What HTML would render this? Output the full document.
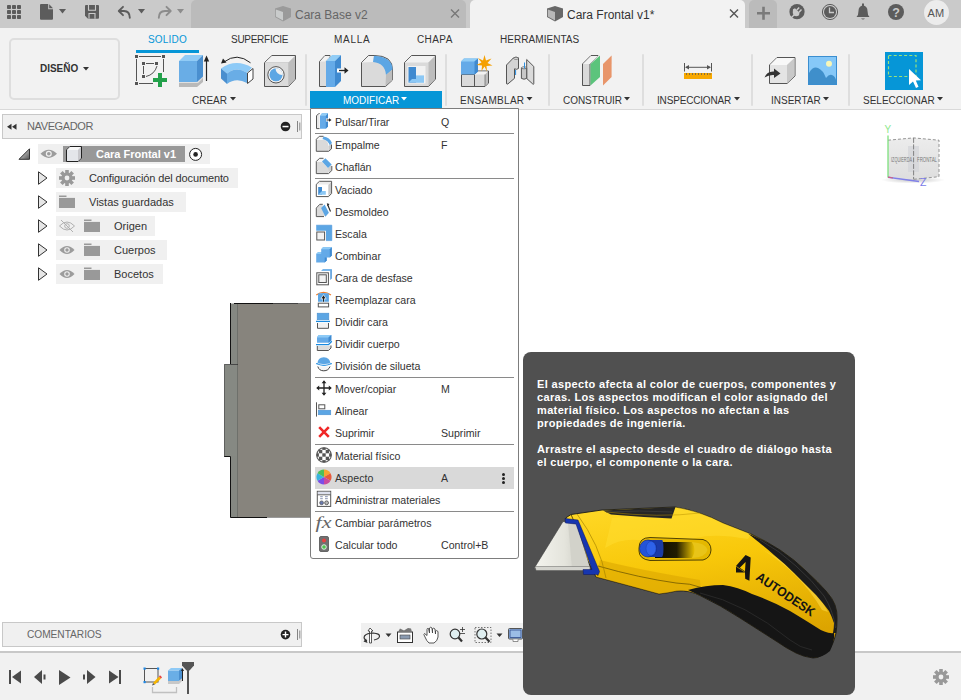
<!DOCTYPE html>
<html><head><meta charset="utf-8">
<style>
*{box-sizing:border-box}
html,body{margin:0;padding:0}
body{width:961px;height:700px;position:relative;overflow:hidden;background:#fff;font-family:"Liberation Sans",sans-serif;color:#333}
.a{position:absolute}
.t{position:absolute;white-space:pre;line-height:1}
.mi{position:absolute;white-space:pre;height:22px;line-height:22px;font-size:10.6px;color:#333}
svg{position:absolute;overflow:visible}
</style></head><body>

<!-- TOP BAR -->
<div class="a" style="left:0;top:0;width:961px;height:28px;background:#cacaca"></div>
<div class="a" style="left:191px;top:0;width:275px;height:28px;background:#bbbbbb;border-radius:5px 5px 0 0"></div>
<div class="a" style="left:470px;top:0;width:275px;height:28px;background:#f2f2f2;border-radius:5px 5px 0 0"></div>
<div class="a" style="left:749px;top:0;width:28px;height:28px;background:#bbbbbb;border-radius:5px 5px 0 0"></div>
<div class="t" style="left:295px;top:8.6px;font-size:12px;color:#666">Cara Base v2</div>
<div class="t" style="left:567px;top:8.6px;font-size:12px;color:#333">Cara Frontal v1*</div>
<div class="a" style="left:924px;top:0;width:25px;height:25px;border-radius:50%;background:#ececec"></div>
<div class="t" style="left:927.6px;top:7.6px;font-size:11px;color:#555">AM</div>

<!-- TOOLBAR -->
<div class="a" style="left:0;top:28px;width:961px;height:82px;background:#f2f2f2;border-bottom:1px solid #d9d9d9"></div>
<div class="a" style="left:9px;top:38px;width:111px;height:62px;border:2px solid #dedede;border-radius:5px"></div>
<div class="t" style="left:40px;top:62.6px;font-size:11px;font-weight:bold;color:#333;transform:scaleX(0.905);transform-origin:0 0">DISEÑO</div>

<div class="t" style="left:148px;top:34.8px;font-size:10px;letter-spacing:0.2px;color:#0696d7">SOLIDO</div>
<div class="a" style="left:136px;top:50px;width:63px;height:3px;background:#0696d7"></div>
<div class="t" style="left:231px;top:34.8px;font-size:10px;letter-spacing:-0.28px;color:#333">SUPERFICIE</div>
<div class="t" style="left:334px;top:34.8px;font-size:10px;letter-spacing:0.7px;color:#333">MALLA</div>
<div class="t" style="left:417px;top:34.8px;font-size:10px;letter-spacing:0.4px;color:#333">CHAPA</div>
<div class="t" style="left:500px;top:34.8px;font-size:10px;letter-spacing:0.05px;color:#333">HERRAMIENTAS</div>

<div class="a" style="left:310px;top:91px;width:132px;height:17px;background:#0696d7"></div>
<div class="t" style="left:192px;top:96.3px;font-size:10px;color:#333">CREAR</div>
<div class="t" style="left:343px;top:96.3px;font-size:10px;color:#fff">MODIFICAR</div>
<div class="t" style="left:460px;top:96.3px;font-size:10px;letter-spacing:0.3px;color:#333">ENSAMBLAR</div>
<div class="t" style="left:563px;top:96.3px;font-size:10px;letter-spacing:-0.05px;color:#333">CONSTRUIR</div>
<div class="t" style="left:657px;top:96.3px;font-size:10px;letter-spacing:-0.17px;color:#333">INSPECCIONAR</div>
<div class="t" style="left:771px;top:96.3px;font-size:10px;color:#333">INSERTAR</div>
<div class="t" style="left:863px;top:96.3px;font-size:10px;color:#333">SELECCIONAR</div>

<div class="a" style="left:305px;top:54px;width:2px;height:52px;background:#dedede;border-radius:1px"></div>
<div class="a" style="left:445px;top:54px;width:2px;height:52px;background:#dedede;border-radius:1px"></div>
<div class="a" style="left:548px;top:54px;width:2px;height:52px;background:#dedede;border-radius:1px"></div>
<div class="a" style="left:642px;top:54px;width:2px;height:52px;background:#dedede;border-radius:1px"></div>
<div class="a" style="left:751px;top:54px;width:2px;height:52px;background:#dedede;border-radius:1px"></div>
<div class="a" style="left:848px;top:54px;width:2px;height:52px;background:#dedede;border-radius:1px"></div>
<div class="a" style="left:885px;top:52px;width:38px;height:38px;background:#0696d7"></div>

<svg style="left:0;top:0" width="961" height="110" viewBox="0 0 961 110">
<!-- grid icon -->
<g fill="#5c5c5c">
<rect x="7" y="5" width="4" height="4" rx="0.8"/><rect x="12" y="5" width="4" height="4" rx="0.8"/><rect x="17" y="5" width="4" height="4" rx="0.8"/>
<rect x="7" y="10" width="4" height="4" rx="0.8"/><rect x="12" y="10" width="4" height="4" rx="0.8"/><rect x="17" y="10" width="4" height="4" rx="0.8"/>
<rect x="7" y="15" width="4" height="4" rx="0.8"/><rect x="12" y="15" width="4" height="4" rx="0.8"/><rect x="17" y="15" width="4" height="4" rx="0.8"/>
</g>
<!-- file -->
<path d="M41 4H48.2V9.3H53V18.8Q53 19.8 52 19.8H41Q40 19.8 40 18.8V5Q40 4 41 4Z" fill="#5c5c5c"/><path d="M49.2 4.2V8.3H53Z" fill="#5c5c5c"/>
<path d="M59 9H66L62.5 13.5Z" fill="#5c5c5c"/>
<!-- save -->
<path d="M86 5H98Q99 5 99 6V17.8Q99 18.8 98 18.8H88L85 15.8V6Q85 5 86 5Z" fill="#5c5c5c"/><path d="M88.5 5V10.3H95.5V5" fill="none" stroke="#cacaca" stroke-width="1.1"/><path d="M89 18.8V13.5H95V18.8" fill="none" stroke="#cacaca" stroke-width="1.1"/>
<!-- undo -->
<path d="M123 6.8L118.8 11L123 15.2M119.5 11H124Q129.8 11.3 129.8 17.8" fill="none" stroke="#5c5c5c" stroke-width="1.9" stroke-linecap="round" stroke-linejoin="round"/>
<path d="M138 9H145L141.5 13.5Z" fill="#5c5c5c"/>
<!-- redo -->
<path d="M166.5 6.8L170.7 11L166.5 15.2M170 11H165Q158.8 11.3 158.8 17.8" fill="none" stroke="#8c8c8c" stroke-width="1.9" stroke-linecap="round" stroke-linejoin="round"/>
<path d="M177 9H184L180.5 13.5Z" fill="#8c8c8c"/>
<!-- tab cube icons -->
<g><path d="M275 8.5L283 6L291 8.5V17L283 21.5L275 17Z" fill="#9a9a9a"/><path d="M275.8 9.5L283 12V20.5L275.8 16.6Z" fill="#c9cbcb"/></g>
<g><path d="M547 8.5L555 6L563 8.5V17L555 21.5L547 17Z" fill="#686868"/><path d="M547.8 9.5L555 12V20.5L547.8 16.6Z" fill="#b9b9b9"/></g>
<!-- close x -->
<path d="M451 9.5L459 17.5M459 9.5L451 17.5" stroke="#777" stroke-width="1.4"/>
<path d="M730 9.5L738 17.5M738 9.5L730 17.5" stroke="#555" stroke-width="1.4"/>
<!-- plus -->
<path d="M757 13.2H770M763.5 6.8V19.8" stroke="#7a7a7a" stroke-width="2.6"/>
<!-- extension -->
<circle cx="797" cy="11.7" r="7.6" fill="#5c5c5c"/><path d="M793 9.2L795 8.2L799.5 12.7L799 15.3Q796.5 16.8 793.8 15.6Q792.2 12.8 793 9.2Z" fill="#cacaca"/><path d="M796.8 10L799.2 7.4M799 12.2L801.5 9.6" stroke="#cacaca" stroke-width="1.5"/><path d="M794.5 14.5L790.5 18.5" stroke="#cacaca" stroke-width="1.2"/>
<!-- clock -->
<circle cx="830" cy="12" r="7.6" fill="none" stroke="#5c5c5c" stroke-width="1"/><circle cx="830" cy="12" r="6" fill="#5c5c5c"/><path d="M829.5 7.5V12.5H834" fill="none" stroke="#cacaca" stroke-width="1.3"/>
<!-- bell -->
<path d="M856.5 17Q858.5 15 858.5 11Q858.5 6 863 5.5Q867.5 6 867.5 11Q867.5 15 869.5 17Z" fill="#5c5c5c"/><rect x="862" y="3.5" width="2" height="2.5" fill="#5c5c5c"/><path d="M861 18.5Q863 20.5 865 18.5Z" fill="#5c5c5c"/>
<!-- help -->
<circle cx="896" cy="12" r="8" fill="#5c5c5c"/><text x="896" y="16.5" text-anchor="middle" font-family="Liberation Sans" font-weight="bold" font-size="12.5" fill="#cacaca">?</text>

<!-- DISEÑO arrow -->
<path d="M83 67H89L86 70.5Z" fill="#333"/>
<!-- panel arrows -->
<g fill="#333">
<path d="M230 97H236L233 100.5Z"/>
<path d="M526.5 97H532.5L529.5 100.5Z"/>
<path d="M624 97H630L627 100.5Z"/>
<path d="M734 97H740L737 100.5Z"/>
<path d="M823 97H829L826 100.5Z"/>
<path d="M937 97H943L940 100.5Z"/>
</g>
<path d="M401 97H407L404 100.5Z" fill="#fff"/>

<!-- sketch -->
<g fill="#555"><rect x="135" y="55" width="3" height="3"/><rect x="162" y="55" width="3" height="3"/><rect x="135" y="82" width="3" height="3"/>
<rect x="142" y="62" width="3" height="3"/><rect x="155" y="62" width="3" height="3"/><rect x="142" y="75" width="3" height="3"/></g>
<path d="M139 56.5H161M136.5 59V81M139 83.5H153M163.5 59V72M146 63.5H154M143.5 66V74M146 76.5Q154.5 74.5 157 66" fill="none" stroke="#555" stroke-width="1"/>
<path d="M158 73H162V78H167V82H162V87H158V82H153V78H158Z" fill="#22a04a"/>
<!-- extrude -->
<path d="M179 87V82H197L203 76.5V82L197 87Z" fill="#b9b9b9"/><path d="M179 82H197L203 76.5V78L198 83H179Z" fill="#e0e0e0"/>
<rect x="179" y="61" width="18" height="21" fill="#69ade6"/><path d="M179 61L185 55H203L197 61Z" fill="#90cbf6"/><path d="M197 61L203 55V76.5L197 82Z" fill="#4a8fcf"/>
<path d="M206.5 59V81" stroke="#222" stroke-width="1.2"/><path d="M203.8 61.5L206.5 55.5L209.2 61.5Z" fill="#222"/>
<!-- revolve -->
<path d="M224 62Q237 52 250.5 62.8" fill="none" stroke="#222" stroke-width="1"/><path d="M221 63.5L223 58.5L226.5 62.5Z" fill="#222"/>
<path d="M221 68.5Q236 58 252 67.7L247 72.8Q236 66 227 73.5Z" fill="#8dcaf7"/>
<path d="M221 68.5L227 73.5V84L221 78.5Z" fill="#4a8fcf"/>
<path d="M227 73.5Q236 66 247 72.8V83Q236 77 227 84Z" fill="#69ade6"/>
<path d="M247.5 73L253 68.5V79L247.5 83.5Z" fill="#fff" stroke="#444" stroke-width="1"/>
<!-- hole -->
<path d="M264.5 62.5L272 55.5H295.5V79L288.5 86.5H264.5Z" fill="#dadada" stroke="#555" stroke-width="1"/>
<path d="M265 62.5L272 56H295L288.5 62.5Z" fill="#f2f2f2"/><path d="M288.5 62.5L295 56V79L288.5 86Z" fill="#bdbdbd"/>
<path d="M264.5 62.5H288.5V86.5" fill="none" stroke="#bdbdbd" stroke-width="0.5"/>
<defs><clipPath id="hc"><circle cx="276" cy="74.8" r="6.6"/></clipPath></defs><circle cx="276" cy="74.8" r="8.2" fill="#f2f2f2" stroke="#555" stroke-width="1"/>
<g clip-path="url(#hc)"><circle cx="276" cy="74.8" r="7" fill="#5ca6e4"/><circle cx="282" cy="68.5" r="6.5" fill="#f2f2f2"/></g>

<!-- push pull -->
<path d="M319.5 86.5V61.5L325 55.5H330V86.5Z" fill="#dcdcdc" stroke="#555" stroke-width="1"/>
<path d="M320 61.5L325 56H330L325 61.5Z" fill="#f2f2f2"/>
<rect x="326" y="61" width="9" height="26" fill="#64aae8"/><path d="M326 61L332 55H341L335 61Z" fill="#92cdf6"/><path d="M335 61L341 55V81L335 87Z" fill="#3f8ad0"/>
<rect x="337" y="68.5" width="4" height="4" fill="#fff"/>
<path d="M339 70.5H345" stroke="#222" stroke-width="1.3"/><path d="M344.5 67.3L348.5 70.5L344.5 73.7Z" fill="#222"/>
<!-- fillet -->
<path d="M361.5 62.5L368.5 55.5H374Q393 55.5 392.5 70V80L385.5 86.5H361.5Z" fill="#dadada" stroke="#555" stroke-width="1"/>
<path d="M362 62.5L368.5 56H374L373 62Z" fill="#f2f2f2"/>
<path d="M374 55.8Q392.5 57 392.5 69.5L386 75Q385 63 373 62Z" fill="#5ca6e4"/>
<path d="M386 75L392.3 69.5V80L385.5 86Z" fill="#bdbdbd"/>
<!-- shell -->
<path d="M404.5 62.5L411.5 55.5H435.5V79L428.5 86.5H404.5Z" fill="#dadada" stroke="#555" stroke-width="1"/>
<path d="M405 62.5L411.5 56H435L428.5 62.5Z" fill="#f2f2f2"/><path d="M428.5 62.5L435 56V79L428.5 86Z" fill="#bdbdbd"/>
<rect x="407.5" y="66" width="18" height="17.5" fill="#f2f2f2"/>
<rect x="408.5" y="67" width="7.5" height="15.6" fill="#3f8ad0"/><path d="M408.5 82.6L412 79H424V82.6Z" fill="#8cc8f5"/><rect x="416" y="75.4" width="8" height="7.2" fill="#8cc8f5"/>
<!-- new component -->
<path d="M461.5 74.5V86.5H485L488.5 83V71H478L474.5 74.5Z" fill="#dadada" stroke="#555" stroke-width="1"/>
<path d="M474.5 74.5V86.5" stroke="#555" stroke-width="1"/>
<path d="M474.5 74.5L478 71.5H488L485 74.5Z" fill="#f2f2f2"/><path d="M485 74.5L488 71.5V83L485 86Z" fill="#bdbdbd"/><path d="M485 74.5V86" stroke="#555" stroke-width="0.6"/>
<path d="M461 61.5L464 58.5H478V71.5L474.5 74.5H461Z" fill="#64aae8"/><path d="M461 61.5L464 58.5H478L474.5 61.5Z" fill="#92cdf6"/><path d="M474.5 61.5L478 58.5V71.5L474.5 74.5Z" fill="#3f8ad0"/>
<path d="M484.5 55L486 60.5L491.5 58.5L487.5 63L492.5 65.5L486.5 66L487 71.5L484.5 66.5L481.5 71L482 65.5L476.5 65L481.5 62.5L478 58L483 60.5Z" fill="#f5a000"/>
<!-- joint -->
<path d="M506.5 65L513.5 57.8Q516 56.5 518.5 57.8V68.5Q516.5 70 514.5 68.8V78.3L507.8 84Q506.5 84.5 506.5 83Z" fill="#d4d4d4" stroke="#555" stroke-width="1"/>
<ellipse cx="516" cy="58.3" rx="2.4" ry="1" fill="#f2f2f2" stroke="#555" stroke-width="0.7"/>
<path d="M515.6 70V75" stroke="#2b8fe0" stroke-width="1"/>
<path d="M526.7 59.5L533.8 66.5V83.5Q533.8 84.8 532.8 84L526.7 78.5Z" fill="#dadada" stroke="#555" stroke-width="1"/>
<path d="M521.4 68Q524 66.5 526.7 68V78.4Q524 80 521.4 78.4Z" fill="#c8c8c8" stroke="#555" stroke-width="1"/>
<ellipse cx="524" cy="67.8" rx="2.6" ry="1" fill="#f2f2f2" stroke="#555" stroke-width="0.7"/>
<path d="M524.5 62.5V68.5" stroke="#2b8fe0" stroke-width="1"/>
<!-- construct -->
<path d="M582.5 85.5V64L591 55.5H598L590 64V85.5Z" fill="#dadada" stroke="#555" stroke-width="1"/>
<path d="M583 64L591 56H598L590 64Z" fill="#f2f2f2"/>
<path d="M590.5 64L600 55.5V77L590.5 85.5Z" fill="#5cc47c"/>
<path d="M603 64L611.6 55.5V77L603 85.5Z" fill="#e8956a"/>
<!-- measure -->
<path d="M684.5 63V71.5M711.5 63V71.5M686 67.3H710" fill="none" stroke="#555" stroke-width="1"/>
<path d="M685 67.3L689 65V69.6ZM711 67.3L707 65V69.6Z" fill="#555"/>
<rect x="684" y="73" width="28" height="6" fill="#f7a800"/>
<path d="M686.5 73V75M689.5 73V75M692.5 73V75M695.5 73V75M698.5 73V75M701.5 73V75M704.5 73V75M707.5 73V75M710 73V75" stroke="#555" stroke-width="0.7"/>
<!-- insert derive -->
<path d="M769.5 65L777 57.5H795V76L787 83.5H769.5Z" fill="#e4e4e4" stroke="#555" stroke-width="1"/>
<path d="M770 65L777 58H794.5L787 65Z" fill="#f8f8f8"/><path d="M787 65L794.5 58V76L787 83Z" fill="#c8c8c8"/>
<path d="M764.5 77.5Q767 71 774 71.5V68.5L780.5 73.5L774 78V75Q769 74.5 764.5 77.5Z" fill="#333"/>
<!-- canvas -->
<rect x="808.5" y="56.5" width="28" height="28" fill="#86c8f8" stroke="#3a8ed0" stroke-width="1"/>
<circle cx="829" cy="63.8" r="3" fill="#f8f6b8"/>
<path d="M809 84V73Q813 66 818 68Q823 70 826 78Q829 74 832 75Q835 76 836 80V84Z" fill="#3f8fcb"/>
<!-- select -->
<rect x="888.5" y="55.5" width="27.5" height="21" fill="none" stroke="#9be27a" stroke-width="1.2" stroke-dasharray="3 2.2"/>
<path d="M909 69L909 85L913 81.5L916 88L918.5 86.8L915.8 80.5L921 80.3Z" fill="#fff"/>
</svg>

<!-- NAVIGATOR -->
<div class="a" style="left:2px;top:114px;width:300px;height:25px;background:#f0f0f0;border:1px solid #c8c8c8"></div>
<div class="t" style="left:27px;top:120.8px;font-size:11px;letter-spacing:-0.38px;color:#666">NAVEGADOR</div>

<!-- NAV HEADER icons -->
<svg style="left:0;top:110px" width="310" height="200" viewBox="0 110 310 200">
<path d="M7 126.8L11.5 123.8V129.8ZM12 126.8L16.5 123.8V129.8Z" fill="#333"/>
<circle cx="285.5" cy="126.5" r="4.8" fill="#222"/><rect x="282.5" y="125.8" width="6" height="1.5" fill="#fff"/>
<path d="M297.5 121V132M299.8 122.5V130.5" stroke="#777" stroke-width="0.9"/>
<!-- row1 -->
<defs><linearGradient id="tg" x1="0" y1="0" x2="1" y2="1"><stop offset="0" stop-color="#eee"/><stop offset="1" stop-color="#555"/></linearGradient></defs>
<path d="M19 159.3L29.5 148.8V159.3Z" fill="url(#tg)" stroke="#333" stroke-width="1"/>
<rect x="38" y="144" width="172" height="20" fill="#f0f0f0"/>
<rect x="63" y="146" width="122" height="16" fill="#989898"/>
<path d="M40.5 153.8Q48.8 145.5 57 153.8Q48.8 162 40.5 153.8Z" fill="#9c9c9c"/><circle cx="48.8" cy="153.8" r="3" fill="#f0f0f0"/><circle cx="48.8" cy="153.8" r="1.8" fill="#9c9c9c"/>
<path d="M66.5 150L70 146.5H81.5V158L78 161.5H66.5Z" fill="#e4e6ea" stroke="#222" stroke-width="1"/>
<path d="M67 150L70 147H81L78 150Z" fill="#f8f8f8"/><path d="M78 150L81 147V158L78 161Z" fill="#c8c8cc"/>
<circle cx="195.6" cy="154.4" r="6" fill="#fff" stroke="#222" stroke-width="1"/><circle cx="195.6" cy="154.4" r="2.3" fill="#222"/>
<!-- rows -->
<g fill="#f0f0f0">
<rect x="56" y="168" width="182" height="20"/>
<rect x="56" y="192" width="130" height="20"/>
<rect x="56" y="216" width="99" height="20"/>
<rect x="56" y="240" width="111" height="20"/>
<rect x="56" y="264" width="107" height="20"/>
</g>
<g fill="#e6e6e6" stroke="#333" stroke-width="1">
<path d="M38.5 171.8L47 178L38.5 184.3Z"/>
<path d="M38.5 195.8L47 202L38.5 208.3Z"/>
<path d="M38.5 219.8L47 226L38.5 232.3Z"/>
<path d="M38.5 243.8L47 250L38.5 256.3Z"/>
<path d="M38.5 267.8L47 274L38.5 280.3Z"/>
</g>
<!-- gear -->
<g transform="translate(67 178)" fill="#999">
<circle r="5.6"/>
<g id="teeth"><rect x="-1.8" y="-8" width="3.6" height="16"/><rect x="-1.8" y="-8" width="3.6" height="16" transform="rotate(45)"/><rect x="-1.8" y="-8" width="3.6" height="16" transform="rotate(90)"/><rect x="-1.8" y="-8" width="3.6" height="16" transform="rotate(135)"/></g>
<circle r="2.4" fill="#f0f0f0"/>
</g>
<!-- folders -->
<g fill="#999">
<path d="M59 195.5H66.5V197H75V208H59Z"/>
<path d="M84 219.5H91.5V221H100V232H84Z"/>
<path d="M84 243.5H91.5V245H100V256H84Z"/>
<path d="M84 267.5H91.5V269H100V280H84Z"/>
</g>
<g fill="#f0f0f0"><rect x="59" y="197" width="16" height="0.9"/><rect x="84" y="221" width="16" height="0.9"/><rect x="84" y="245" width="16" height="0.9"/><rect x="84" y="269" width="16" height="0.9"/></g>
<!-- eyes -->
<g>
<path d="M59.5 250Q67 242 74.5 250Q67 258 59.5 250Z" fill="#9c9c9c"/><circle cx="67" cy="250" r="2.8" fill="#f0f0f0"/><circle cx="67" cy="250" r="1.7" fill="#9c9c9c"/>
<path d="M59.5 274Q67 266 74.5 274Q67 282 59.5 274Z" fill="#9c9c9c"/><circle cx="67" cy="274" r="2.8" fill="#f0f0f0"/><circle cx="67" cy="274" r="1.7" fill="#9c9c9c"/>
<path d="M59.5 226Q67 218 74.5 226Q67 234 59.5 226Z" fill="none" stroke="#b0b0b0" stroke-width="1"/><circle cx="67" cy="226" r="2.3" fill="none" stroke="#b0b0b0" stroke-width="1"/><path d="M61 220L73 232" stroke="#b0b0b0" stroke-width="1"/>
</g>
</svg>
<div class="t" style="left:96px;top:148.7px;font-size:11px;font-weight:bold;color:#fff">Cara Frontal v1</div>
<div class="t" style="left:89px;top:173.3px;font-size:11px;letter-spacing:-0.12px;color:#333">Configuración del documento</div>
<div class="t" style="left:89px;top:197.3px;font-size:11px;color:#333">Vistas guardadas</div>
<div class="t" style="left:114px;top:221.3px;font-size:11px;color:#333">Origen</div>
<div class="t" style="left:114px;top:245.3px;font-size:11px;color:#333">Cuerpos</div>
<div class="t" style="left:114px;top:269.3px;font-size:11px;color:#333">Bocetos</div>

<!-- VIEWCUBE -->
<svg style="left:860px;top:115px" width="100" height="80" viewBox="860 115 100 80">
<defs><linearGradient id="cg" x1="0" y1="0" x2="0" y2="1"><stop offset="0" stop-color="#ececec"/><stop offset="1" stop-color="#dedede"/></linearGradient>
<radialGradient id="sh" cx="0.5" cy="0.5" r="0.5"><stop offset="0" stop-color="#000" stop-opacity="0.22"/><stop offset="1" stop-color="#000" stop-opacity="0"/></radialGradient></defs>
<ellipse cx="913" cy="180" rx="32" ry="3.5" fill="url(#sh)"/>
<path d="M888 140.2L913.6 137.9L939 140.2V176.7L913.6 179.3L888 177Z" fill="url(#cg)"/>
<rect x="908" y="146" width="11" height="26" fill="#d4d6da" opacity="0.8"/>
<path d="M888 140.2L913.6 137.9L939 140.2V176.7L913.6 179.3" fill="none" stroke="#8a8a8a" stroke-width="0.9" stroke-dasharray="3 2"/>
<path d="M913.6 137.9V179.3" stroke="#777" stroke-width="0.9" stroke-dasharray="5 1.5"/>
<text x="891" y="162" font-family="Liberation Sans" font-size="7" fill="#777" transform="scale(1 1)" textLength="21" lengthAdjust="spacingAndGlyphs">IZQUIERDA</text>
<text x="917" y="162" font-family="Liberation Sans" font-size="7" fill="#777" textLength="20" lengthAdjust="spacingAndGlyphs">FRONTAL</text>
<path d="M888 135.5V177.5" stroke="#7ee07e" stroke-width="1.3"/>
<path d="M888 177.2L919 181.5" stroke="#8080e8" stroke-width="1.6"/>
<path d="M888 177.2L893 178" stroke="#d06080" stroke-width="1.2"/>
<text x="884.6" y="133" font-family="Liberation Sans" font-size="10" fill="#8ee88e">Y</text>
<text x="920" y="186" font-family="Liberation Sans" font-size="10.5" fill="#7a7ae8">Z</text>
</svg>

<!-- BODY 3D -->
<svg style="left:220px;top:300px" width="95" height="222" viewBox="220 300 95 222">
<rect x="237" y="303" width="78" height="215" fill="#87847d"/>
<rect x="230.5" y="303.5" width="7" height="61" fill="#858882"/>
<rect x="224" y="364" width="14" height="92.5" fill="#868983"/>
<rect x="230.5" y="456" width="7" height="61.5" fill="#858882"/>
<path d="M237.5 304V517" stroke="#6e706b" stroke-width="1"/>
<path d="M230.5 303V364.5H237.5M224 456.5H230.5V517.5H267" fill="none" stroke="#111" stroke-width="1"/>
<path d="M237 364.5H224.5V456.5" fill="none" stroke="#555" stroke-width="0.8"/>
<path d="M234 303.5H273" stroke="#111" stroke-width="1"/><path d="M273 303.5H298" stroke="#444" stroke-width="1"/><path d="M298 303.5H310" stroke="#777" stroke-width="1"/>
<path d="M267 517.5H310" stroke="#9a9a9a" stroke-width="1"/>
</svg>

<!-- MENU -->
<div class="a" style="left:310px;top:108px;width:209px;height:451px;background:#fff;border:1px solid #7d7d7d;border-radius:0 0 3px 3px"></div>

<svg style="left:316px;top:113px" width="16" height="16" viewBox="0 0 16 16"><path d="M3.5 0.5H2.8L0.5 2.8V15.6H3.5" fill="#e8e8e8" stroke="#555" stroke-width="1"/><path d="M4 2.8L6 0.3H12V13.5L9.8 15.7H4Z" fill="#64aae8"/><path d="M9.8 2.8L12 0.3V13.5L9.8 15.7Z" fill="#3f8ad0"/><path d="M4 2.8L6 0.3H12L9.8 2.8Z" fill="#92cdf6"/><rect x="10" y="5.5" width="2.5" height="3" fill="#fff"/><path d="M10.5 7H13.5" stroke="#222" stroke-width="1"/><path d="M13 5.3L15.5 7L13 8.7Z" fill="#222"/></svg>
<div class="mi" style="left:335px;top:111px">Pulsar/Tirar</div>
<div class="mi" style="left:441px;top:111px">Q</div>
<div class="a" style="left:315px;top:133px;width:199px;height:1px;background:#8a8a8a"></div>
<svg style="left:316px;top:136px" width="16" height="16" viewBox="0 0 16 16"><path d="M1 3.8H7Q12.3 4.3 12.5 10V15H1Z" fill="#dadada"/><path d="M1 3.6L3.6 1H7.5L6.5 3.6Z" fill="#f6f6f6"/><path d="M12.5 10L15.2 8V12.8L12.6 15.2Z" fill="#cacaca"/><path d="M7.5 0.5Q13.8 1.3 16 7L13.8 9.3Q12.3 4.6 6.5 3Z" fill="#5ca6e4"/><path d="M7.5 0.3H3.3L0.3 3.3V15.3H12.7L15.5 12.8V8.5" fill="none" stroke="#555" stroke-width="1"/></svg>
<div class="mi" style="left:335px;top:134px">Empalme</div>
<div class="mi" style="left:441px;top:134px">F</div>
<svg style="left:316px;top:158px" width="16" height="16" viewBox="0 0 16 16"><path d="M1 3.8H6L12 10V15H1Z" fill="#dadada"/><path d="M1 3.6L3.8 1H8.8L6 3.6Z" fill="#f6f6f6"/><path d="M12 10L15.3 7V12.3L12.3 15Z" fill="#d0d0d0"/><path d="M6 3.6L9.4 0.3L15.7 6.6L12 10Z" fill="#5ca6e4"/><path d="M7.5 0.3H3.5L0.3 3.5V15.6H12.5L15.8 12.5V8" fill="none" stroke="#555" stroke-width="1"/></svg>
<div class="mi" style="left:335px;top:156px">Chaflán</div>
<div class="a" style="left:315px;top:178px;width:199px;height:1px;background:#8a8a8a"></div>
<svg style="left:316px;top:181px" width="16" height="16" viewBox="0 0 16 16"><path d="M0.3 3.3L3.5 0.3H15.6V12.5L12.5 15.6H0.3Z" fill="#fff" stroke="#555" stroke-width="1"/><path d="M1 3.5L3.8 1H15L12.3 3.5Z" fill="#ececec"/><path d="M12.3 3.8L15 1.2V12.3L12.3 15Z" fill="#c8c8c8"/><rect x="2.2" y="6" width="3.8" height="7.8" fill="#3f8ad0"/><path d="M2.2 13.8L6 10H9.8V13.8Z" fill="#8cc8f5"/></svg>
<div class="mi" style="left:335px;top:179px">Vaciado</div>
<svg style="left:316px;top:203px" width="16" height="16" viewBox="0 0 16 16"><path d="M1 5.2L4 2H6.5L9.4 13H1Z" fill="#dadada"/><path d="M6.8 1.3H3.8L0.3 5.1V13.6H8" fill="none" stroke="#555" stroke-width="1"/><path d="M5.1 5L8.6 1.4L12.9 9.7L9.4 13.7Z" fill="#5ca6e4"/><path d="M11.8 2L14.5 8.5" stroke="#222" stroke-width="1.1"/><path d="M10.8 0.3L13.5 1L11.6 3.2Z" fill="#222"/></svg>
<div class="mi" style="left:335px;top:201px">Desmoldeo</div>
<svg style="left:316px;top:225px" width="16" height="16" viewBox="0 0 16 16"><path d="M0.2 0.2H15.8V15.6H10V5.8H0.2Z" fill="#5ca6e4"/><path d="M0.2 0.2H15.8V15.6H10" fill="none" stroke="#4a94d8" stroke-width="0.6"/><rect x="0.8" y="7" width="7.8" height="8" fill="#f2f2f2" stroke="#555" stroke-width="1"/></svg>
<div class="mi" style="left:335px;top:223px">Escala</div>
<svg style="left:316px;top:247px" width="16" height="16" viewBox="0 0 16 16"><path d="M5.2 2.3L7 0.3H15.8V8.5L13.8 10.5H5.2Z" fill="#64aae8"/><path d="M5.2 2.3L7 0.3H15.8L13.8 2.3Z" fill="#8dcaf6"/><path d="M13.8 2.3L15.8 0.3V8.5L13.8 10.5Z" fill="#3f8ad0"/><path d="M0.2 7L2.2 5H10.7V13.5L8.7 15.6H0.2Z" fill="#64aae8"/><path d="M0.2 7L2.2 5H5.2V7Z" fill="#8dcaf6"/><path d="M8.7 10.5H10.7V13.5L8.7 15.6Z" fill="#3f8ad0"/></svg>
<div class="mi" style="left:335px;top:245px">Combinar</div>
<svg style="left:316px;top:269px" width="16" height="16" viewBox="0 0 16 16"><path d="M5.3 2L7 0.2H15.8V9.5L14.3 11V2Z" fill="#4a94d8"/><path d="M5.3 2L7 0.2H15.8L14.3 2Z" fill="#7ab8ee"/><rect x="0.8" y="3.8" width="11.6" height="12" fill="#fff" stroke="#555" stroke-width="1"/><rect x="2.8" y="5.8" width="7.5" height="7.7" fill="#f2f2f2" stroke="#555" stroke-width="1"/></svg>
<div class="mi" style="left:335px;top:267px">Cara de desfase</div>
<svg style="left:316px;top:291px" width="16" height="16" viewBox="0 0 16 16"><path d="M0.3 4Q7.5 -1.2 15 4" fill="none" stroke="#f08030" stroke-width="1.2"/><path d="M2 2.6Q7.5 1.2 12.9 2.6V10.8H2Z" fill="#5ca6e4"/><path d="M7.5 3.3L4.3 8.2H6.7V10.8H8.3V8.2H10.7Z" fill="#fff"/><path d="M7.5 4.3L5.4 7.6H7V10.8H8V7.6H9.6Z" fill="#222"/><rect x="2.3" y="12.2" width="10.3" height="3.7" fill="#fff" stroke="#555" stroke-width="1"/></svg>
<div class="mi" style="left:335px;top:289px">Reemplazar cara</div>
<svg style="left:316px;top:313px" width="16" height="16" viewBox="0 0 16 16"><rect x="1.2" y="0.2" width="11.6" height="6.5" fill="#5ca6e4" stroke="#4a8fcf" stroke-width="0.6"/><path d="M0 8.4H14" stroke="#1a8ae0" stroke-width="1.3"/><path d="M1.5 10V15.3H12.5V10" fill="#f2f2f2" stroke="#555" stroke-width="1"/></svg>
<div class="mi" style="left:335px;top:311px">Dividir cara</div>
<svg style="left:316px;top:335px" width="16" height="16" viewBox="0 0 16 16"><path d="M1 2.2L2.8 0.1H15.3V5.5L12.5 7.8H1Z" fill="#64aae8"/><path d="M1 2.2L2.8 0.1H15.3L12.5 2.4H1Z" fill="#8dcaf6"/><path d="M12.5 2.4L15.3 0.1V5.5L12.5 7.8Z" fill="#3f8ad0"/><path d="M0 9.6H12.5L15.8 6.3" fill="none" stroke="#1a8ae0" stroke-width="1.3"/><path d="M1.3 11V15.5H12.5L15 13V10.5" fill="#dcdcdc" stroke="#555" stroke-width="1"/></svg>
<div class="mi" style="left:335px;top:333px">Dividir cuerpo</div>
<svg style="left:316px;top:357px" width="16" height="16" viewBox="0 0 16 16"><path d="M1.5 7Q1.5 0.3 7.8 0.3Q14 0.3 14.5 7Z" fill="#5ca6e4"/><path d="M0.2 6.5Q8 10 15.8 6.5" fill="none" stroke="#1a8ae0" stroke-width="1.3"/><path d="M2 6.5Q8 9 14 6.5" fill="none" stroke="#fff" stroke-width="0.6"/><path d="M1.8 9.5Q3 13.8 7.8 13.8Q12.5 13.8 14 9.5" fill="#f4f4f4" stroke="#444" stroke-width="1"/></svg>
<div class="mi" style="left:335px;top:355px">División de silueta</div>
<div class="a" style="left:315px;top:377px;width:199px;height:1px;background:#8a8a8a"></div>
<svg style="left:316px;top:380px" width="16" height="16" viewBox="0 0 16 16"><path d="M8 1.5V14.5M1.5 8H14.5" stroke="#222" stroke-width="1.3"/><path d="M8 0.2L5.6 3.2H10.4ZM8 15.8L5.6 12.8H10.4ZM0.2 8L3.2 5.6V10.4ZM15.8 8L12.8 5.6V10.4Z" fill="#222"/></svg>
<div class="mi" style="left:335px;top:378px">Mover/copiar</div>
<div class="mi" style="left:441px;top:378px">M</div>
<svg style="left:316px;top:402px" width="16" height="16" viewBox="0 0 16 16"><path d="M0.5 0.3V14.6" stroke="#555" stroke-width="1"/><rect x="2.8" y="2.8" width="6" height="4" fill="#fff" stroke="#555" stroke-width="1"/><rect x="2.2" y="8.2" width="12.6" height="4.6" fill="#5ca6e4" stroke="#4a8fcf" stroke-width="0.5"/></svg>
<div class="mi" style="left:335px;top:400px">Alinear</div>
<svg style="left:316px;top:424px" width="16" height="16" viewBox="0 0 16 16"><path d="M3.2 3.2L12.8 12.8M12.8 3.2L3.2 12.8" stroke="#f02828" stroke-width="2.6"/></svg>
<div class="mi" style="left:335px;top:422px">Suprimir</div>
<div class="mi" style="left:441px;top:422px">Suprimir</div>
<div class="a" style="left:315px;top:444px;width:199px;height:1px;background:#8a8a8a"></div>
<svg style="left:316px;top:447px" width="16" height="16" viewBox="0 0 16 16"><defs><clipPath id="mc"><circle cx="8" cy="8" r="7.5"/></clipPath></defs><circle cx="8" cy="8" r="7.5" fill="#fff"/><g clip-path="url(#mc)" fill="#555"><rect x="-3.9" y="-3.9" width="3.4" height="3.4"/><rect x="-3.9" y="2.9" width="3.4" height="3.4"/><rect x="-3.9" y="9.7" width="3.4" height="3.4"/><rect x="-3.9" y="16.5" width="3.4" height="3.4"/><rect x="-0.5" y="-0.5" width="3.4" height="3.4"/><rect x="-0.5" y="6.3" width="3.4" height="3.4"/><rect x="-0.5" y="13.1" width="3.4" height="3.4"/><rect x="2.9" y="-3.9" width="3.4" height="3.4"/><rect x="2.9" y="2.9" width="3.4" height="3.4"/><rect x="2.9" y="9.7" width="3.4" height="3.4"/><rect x="2.9" y="16.5" width="3.4" height="3.4"/><rect x="6.3" y="-0.5" width="3.4" height="3.4"/><rect x="6.3" y="6.3" width="3.4" height="3.4"/><rect x="6.3" y="13.1" width="3.4" height="3.4"/><rect x="9.7" y="-3.9" width="3.4" height="3.4"/><rect x="9.7" y="2.9" width="3.4" height="3.4"/><rect x="9.7" y="9.7" width="3.4" height="3.4"/><rect x="9.7" y="16.5" width="3.4" height="3.4"/><rect x="13.1" y="-0.5" width="3.4" height="3.4"/><rect x="13.1" y="6.3" width="3.4" height="3.4"/><rect x="13.1" y="13.1" width="3.4" height="3.4"/><rect x="16.5" y="-3.9" width="3.4" height="3.4"/><rect x="16.5" y="2.9" width="3.4" height="3.4"/><rect x="16.5" y="9.7" width="3.4" height="3.4"/><rect x="16.5" y="16.5" width="3.4" height="3.4"/></g><circle cx="8" cy="8" r="7.3" fill="none" stroke="#555" stroke-width="1.1"/></svg>
<div class="mi" style="left:335px;top:445px">Material físico</div>
<div class="a" style="left:315px;top:467px;width:199px;height:22px;background:#d9d9d9"></div>
<div class="a" style="left:501.5px;top:473px;width:3px;height:3px;background:#222;border-radius:50%"></div>
<div class="a" style="left:501.5px;top:477px;width:3px;height:3px;background:#222;border-radius:50%"></div>
<div class="a" style="left:501.5px;top:481px;width:3px;height:3px;background:#222;border-radius:50%"></div>
<svg style="left:316px;top:469px" width="16" height="16" viewBox="0 0 16 16"><path d="M8 8L8 0.5A7.5 7.5 0 0 1 14.5 4.25Z" fill="#f7a430"/><path d="M8 8L14.5 4.25A7.5 7.5 0 0 1 14.5 11.75Z" fill="#e85a3c"/><path d="M8 8L14.5 11.75A7.5 7.5 0 0 1 8 15.5Z" fill="#c94aa0"/><path d="M8 8L8 15.5A7.5 7.5 0 0 1 1.5 11.75Z" fill="#7a4ee8"/><path d="M8 8L1.5 11.75A7.5 7.5 0 0 1 1.5 4.25Z" fill="#38b4e0"/><path d="M8 8L1.5 4.25A7.5 7.5 0 0 1 8 0.5Z" fill="#4cbf5a"/></svg>
<div class="mi" style="left:335px;top:467px">Aspecto</div>
<div class="mi" style="left:441px;top:467px">A</div>
<svg style="left:316px;top:491px" width="16" height="16" viewBox="0 0 16 16"><rect x="1.3" y="0.3" width="13.4" height="15.1" fill="#fff" stroke="#555" stroke-width="1"/><rect x="1.8" y="0.8" width="12.4" height="2.7" fill="#dde0ee"/><path d="M1.3 3.8H14.7" stroke="#555" stroke-width="0.9"/><path d="M4.2 5.7H6.8M9 5.7H11.8M4.2 7.7H6.8M9 7.7H11.8" stroke="#7a86a8" stroke-width="0.9"/><circle cx="5.6" cy="11.8" r="1.9" fill="#6a7ab0" stroke="#555" stroke-width="0.7"/><circle cx="10.6" cy="11.8" r="1.9" fill="#bbb" stroke="#555" stroke-width="0.9"/></svg>
<div class="mi" style="left:335px;top:489px">Administrar materiales</div>
<div class="a" style="left:315px;top:511px;width:199px;height:1px;background:#8a8a8a"></div>
<svg style="left:316px;top:514px" width="16" height="16" viewBox="0 0 16 16"><text x="-0.5" y="13.6" font-family="Liberation Serif" font-style="italic" font-size="17" fill="#666" textLength="16" lengthAdjust="spacingAndGlyphs">fx</text></svg>
<div class="mi" style="left:335px;top:512px">Cambiar parámetros</div>
<svg style="left:316px;top:536px" width="16" height="16" viewBox="0 0 16 16"><rect x="3.5" y="0.5" width="9" height="15" rx="1.5" fill="#707070" stroke="#666"/><circle cx="8" cy="4.5" r="2" fill="#e84040"/><circle cx="8" cy="11" r="2.3" fill="#50c050" stroke="#fff" stroke-width="0.8"/></svg>
<div class="mi" style="left:335px;top:534px">Calcular todo</div>
<div class="mi" style="left:441px;top:534px">Control+B</div>

<!-- BOTTOM -->
<div class="a" style="left:2px;top:622px;width:300px;height:25px;background:#f0f0f0;border:1px solid #c8c8c8"></div>
<div class="t" style="left:27px;top:630.3px;font-size:10.2px;letter-spacing:-0.05px;color:#666">COMENTARIOS</div>
<div class="a" style="left:361px;top:623px;width:162px;height:24px;background:#f0f0f0"></div>
<div class="a" style="left:0;top:651px;width:961px;height:49px;background:#f1f1f1;border-top:2px solid #c8c8c8"></div>
<svg style="left:0;top:615px" width="961" height="85" viewBox="0 615 961 85">
<circle cx="285.5" cy="634.6" r="4.8" fill="#222"/><path d="M282.5 634.6H288.5M285.5 631.6V637.6" stroke="#fff" stroke-width="1.4"/>
<path d="M297.5 629V640M299.8 630.5V638.5" stroke="#777" stroke-width="0.9"/>
<!-- orbit -->
<path d="M370 628L368 631H369.5V643H371.5V631H373Z" fill="#fff" stroke="#333" stroke-width="0.8"/>
<path d="M367 641Q363 639 364.5 636Q367 633 373 633Q380 633.5 379.5 636.5Q379 639 374 640" fill="none" stroke="#333" stroke-width="1.2"/>
<path d="M366 638.5L363.5 641.5L367.5 643Z" fill="#333"/>
<path d="M385.5 633.5H391.5L388.5 637Z" fill="#333"/>
<!-- look at -->
<rect x="397.5" y="632" width="15" height="10.5" fill="#fff" stroke="#333" stroke-width="1"/>
<rect x="400" y="635" width="10" height="4" fill="#8a9ab0" stroke="#444" stroke-width="0.6"/>
<path d="M398 632L400 628.5L404 630.5L408 628L411 628.5L412 632Z" fill="#777"/>
<!-- pan hand -->
<path d="M425 637Q423 634 424.5 633.5L427 635.5V629.5Q427 628 428.5 628.5L429.5 633V628Q430.5 626.5 432 628L432.5 633V628.8Q433.5 627.5 435 629L435.5 634V631Q436.5 630 438 631.5V637Q437.5 641 434 643H429Q426.5 641 425 637Z" fill="#fff" stroke="#444" stroke-width="0.9"/>
<!-- zoom -->
<circle cx="455" cy="634" r="4.8" fill="#dfeef0" stroke="#333" stroke-width="1.2"/><path d="M458.5 637.5L462 641.5" stroke="#333" stroke-width="2.2"/>
<path d="M460 629.5H465M462.5 627V632M460 633.5H465" stroke="#333" stroke-width="0.8"/>
<!-- fit -->
<rect x="475" y="627.5" width="16" height="15" fill="none" stroke="#555" stroke-width="0.8" stroke-dasharray="1.5 1.5"/>
<circle cx="481.8" cy="634" r="5" fill="#dfeef0" stroke="#333" stroke-width="1.2"/><path d="M485.5 637.5L489.5 641.8" stroke="#333" stroke-width="2.2"/>
<path d="M496.5 633.5H502.5L499.5 637Z" fill="#333"/>
<!-- display -->
<rect x="508.5" y="628.5" width="14" height="10.5" rx="1" fill="#9fc0e8" stroke="#555" stroke-width="1"/>
<rect x="510" y="630" width="11" height="7.5" fill="#9bbde6" stroke="#2d4a8a" stroke-width="0.8"/>
<path d="M513 639.5V641.5H518V639.5" fill="#fff" stroke="#777" stroke-width="0.8"/>
<!-- timeline controls -->
<g fill="#4a4a4a">
<rect x="9" y="670" width="2" height="14"/><path d="M21 670.5V683.5L12 677Z"/>
<path d="M42 670V684L34 677Z"/><rect x="43.5" y="674.5" width="2" height="5"/>
<path d="M59 670V685L70.5 677.5Z"/>
<rect x="83" y="674.5" width="2" height="5"/><path d="M87 670V684L95.5 677Z"/>
<path d="M109 670.5V683.5L118.5 677Z"/><rect x="119" y="670" width="2" height="14"/>
</g>
<!-- timeline sketch -->
<rect x="144.5" y="668.5" width="13.5" height="13.5" fill="none" stroke="#555" stroke-width="1"/>
<g fill="#1e88e5"><rect x="143.5" y="667.5" width="2.2" height="2.2"/><rect x="157" y="667.5" width="2.2" height="2.2"/><rect x="143.5" y="681" width="2.2" height="2.2"/></g>
<path d="M153 683L159 676.5L161 678.5L155 684.5Z" fill="#f7b500"/><path d="M159 676.5L160 675.2L162 677.2L161 678.5Z" fill="#e83a3a"/><path d="M153 683L152 685.5L155 684.5Z" fill="#555"/>
<!-- timeline extrude -->
<rect x="168" y="670.5" width="11" height="10.5" fill="#6aaee6"/><path d="M168 670.5L171 668H182L179 670.5Z" fill="#8fcaf6"/><path d="M179 670.5L182 668V678.5L179 681Z" fill="#4a8fcf"/>
<path d="M168 681H179L182 678.5V681L179 684H168Z" fill="#c8c8c8"/>
<path d="M182.5 669.5V681" stroke="#222" stroke-width="1"/><path d="M181 671L182.5 668L184 671Z" fill="#222"/>
<path d="M152.5 687V692.5H176.5V687" fill="none" stroke="#c0c0c0" stroke-width="1.3"/>
<!-- marker -->
<path d="M182 662H194V665.5L189.5 670.5H186.5L182 665.5Z" fill="#555"/><rect x="187" y="668" width="2" height="26" fill="#555"/>
<!-- gear -->
<g transform="translate(941 677)" fill="#999">
<circle r="5.6"/>
<rect x="-1.8" y="-8" width="3.6" height="16"/><rect x="-1.8" y="-8" width="3.6" height="16" transform="rotate(45)"/><rect x="-1.8" y="-8" width="3.6" height="16" transform="rotate(90)"/><rect x="-1.8" y="-8" width="3.6" height="16" transform="rotate(135)"/>
<circle r="2.4" fill="#f1f1f1"/>
</g>
</svg>
<!-- TOOLTIP -->
<div class="a" style="left:523px;top:352px;width:332px;height:343px;background:#505050;border-radius:8px"></div>
<div class="a" style="left:537px;top:377.7px;width:320px;font-size:11px;line-height:13px;font-weight:bold;color:#fff;letter-spacing:0.36px;white-space:pre">El aspecto afecta al color de cuerpos, componentes y
caras. Los aspectos modifican el color asignado del
material físico. Los aspectos no afectan a las
propiedades de ingeniería.

Arrastre el aspecto desde el cuadro de diálogo hasta
el cuerpo, el componente o la cara.</div>
<svg style="left:523px;top:480px" width="332" height="200" viewBox="523 480 332 200">
<defs>
<linearGradient id="yb" x1="0" y1="0" x2="0.3" y2="1"><stop offset="0" stop-color="#ffd928"/><stop offset="0.45" stop-color="#f8c80a"/><stop offset="1" stop-color="#dca400"/></linearGradient>
<linearGradient id="bl" x1="0" y1="0" x2="1" y2="0"><stop offset="0" stop-color="#f4f4ee"/><stop offset="0.55" stop-color="#e4e4dc"/><stop offset="1" stop-color="#c4c4bc"/></linearGradient>
<linearGradient id="sl" x1="0" y1="0" x2="1" y2="0"><stop offset="0" stop-color="#0a0a05"/><stop offset="0.55" stop-color="#221c00"/><stop offset="1" stop-color="#e8c000"/></linearGradient>
<linearGradient id="hy" x1="0" y1="0" x2="1" y2="1"><stop offset="0" stop-color="#ffe045"/><stop offset="1" stop-color="#f0bc00"/></linearGradient>
</defs>
<!-- body base -->
<path d="M565.6 518L571 514.5L602 510L675 507Q700 511 723 523L751 534Q766 541 780 550Q795 560 806 571Q818 582 826 591Q833 599 835 605Q837.5 612 837 619Q837 627 836 633Q833 646 828 651Q820 658 813 658Q804 657 796 653Q786 648 776 641L740 618Q720 605 701 596Q690 590 677 591Q668 593 659 594Q630 586 596 577Z" fill="url(#yb)" stroke="#1a1a1a" stroke-width="0.9"/>
<!-- upper highlight -->
<path d="M612 518Q645 514 670 518.5L675 507Q700 511 723 523L751 534L748 539Q700 530 680 545L640 540Q620 538 605 548Z" fill="#ffdc30" opacity="0.55"/>
<path d="M760 548Q800 572 822 610L828 612Q815 585 790 565Z" fill="#ffe050" opacity="0.5"/>
<!-- lower shade on front -->
<path d="M600 560Q640 570 700 580L701 596Q690 590 677 591Q668 593 659 594Q630 586 596 577Z" fill="#d8a400" opacity="0.55"/>
<path d="M598 566Q640 578 676 583Q690 583 703 588" fill="none" stroke="#4a3a00" stroke-width="0.6"/>
<!-- top black grip -->
<path d="M603 510.5L675.5 507L671.5 518.5Q640 517 611 514.5Z" fill="#262626"/>
<path d="M606 512Q640 510 672 512" fill="none" stroke="#3c3c3c" stroke-width="0.8"/>
<!-- top right black rim -->
<path d="M748 533.5Q766 541 780 550Q795 560 806 571Q818 582 826 591Q833 599 835 605Q837.5 612 837 619Q837 627 836 633L833 633Q834 628 834 623Q832 617 829 611Q823 603 816 595Q805 584 794 573Q784 563 774 555Q765 547 756 540Z" fill="#1c1c1c"/>
<path d="M760 540Q780 551 796 566Q812 580 824 596Q833 610 835.5 628" fill="none" stroke="#383838" stroke-width="0.9"/>
<!-- lower black grip -->
<path d="M688 590Q706 585 723 585Q738 587 752 594Q772 601 790 611Q805 620 816 627Q826 634 834 633Q835 640 830 651Q822 658 813 658Q804 657 796 653Q786 648 776 641L740 618Q720 605 701 596Z" fill="#151515"/>
<path d="M700 593Q745 603 790 640Q800 648 812 650" fill="none" stroke="#303030" stroke-width="0.7"/>
<!-- front cap lines -->
<path d="M571 514.5L598 576" stroke="#5a4600" stroke-width="0.9"/>
<path d="M577 514Q600 545 606 578" fill="none" stroke="#a88400" stroke-width="0.7"/>
<path d="M606 512Q660 518 700 513" fill="none" stroke="#b89000" stroke-width="0.5"/>
<!-- blade -->
<path d="M534 568.5L563 521.5L576.5 524L590 568.5Z" fill="url(#bl)" stroke="#3a3a3a" stroke-width="0.6"/>
<path d="M568 523L576.5 524L590 568.5L572 568.5Z" fill="#d2d2ca"/>
<path d="M535 566.5H590V570.5H536Z" fill="#d4d4ce" stroke="#444" stroke-width="0.4"/>
<!-- blue bracket -->
<path d="M565 518.5L578 520L599.5 571.5L598.5 574.5L583.5 574.5L583 569.5L592 569.5L576 524L565.5 523Z" fill="#1636b0" stroke="#0a1460" stroke-width="0.5"/>
<!-- slot -->
<path d="M639 548Q639 537.5 650 537.5L703 539.5Q711 542 711 550Q710.5 558 703 560L650 560.5Q639 559 639 551Z" fill="#e4b800" stroke="#2a2200" stroke-width="0.8"/>
<path d="M655 542H692Q697 550 692 558H655Z" fill="url(#sl)"/>
<path d="M692 542Q706 543 707.5 550Q706 557 692 558Q697 550 692 542Z" fill="#e8c418"/>
<rect x="648" y="540" width="14" height="17" fill="#1a3aa8"/>
<ellipse cx="662" cy="548.5" rx="1.5" ry="8.5" fill="#1c3ca0"/>
<ellipse cx="648" cy="548.5" rx="8.5" ry="8.5" fill="#2454d8" stroke="#0c2280" stroke-width="0.6"/>
<ellipse cx="651" cy="548.5" rx="5" ry="7" fill="#2e62ea" stroke="#1a40b0" stroke-width="0.5"/>
<!-- logo -->
<path d="M736 566L745.6 555L750.7 557.5L749.4 580.7L745.2 578.7L745 572.5L736 572.6Z" fill="#141414"/>
<path d="M739.8 567.8L745.6 562L745 571.3Z" fill="#f5c400"/>
<path d="M736 566.3L745 572.2" stroke="#f5c400" stroke-width="0.6"/>
<text x="0" y="0" transform="translate(755 579) rotate(34)" font-family="Liberation Sans" font-weight="bold" font-size="13" fill="#141414" textLength="68" lengthAdjust="spacingAndGlyphs">AUTODESK</text>
</svg>

</body></html>
